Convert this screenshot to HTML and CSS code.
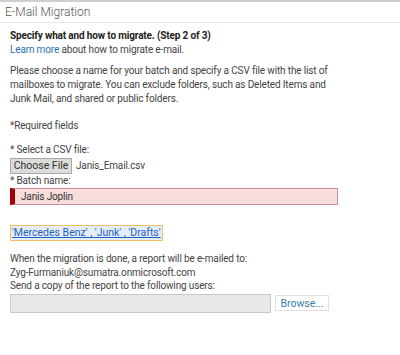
FILE: index.html
```html
<!DOCTYPE html>
<html lang="en">
<head>
    <meta charset="UTF-8">
    <title>E-Mail Migration</title>
    <link rel="stylesheet" href="styles.css">
</head>
<body>
    <div class="topbar"></div>
    <h1 class="title">E-Mail Migration</h1>
    <div class="content">
        <p class="step">Specify what and how to migrate. (Step 2 of 3)</p>
        <p class="learn"><a href="#">Learn more</a> about how to migrate e-mail.</p>

        <p class="intro">Please choose a name for your batch and specify a CSV file with the list of mailboxes to migrate. You can exclude folders, such as Deleted Items and Junk Mail, and shared or public folders.</p>

        <p class="required">*Required fields</p>

        <div class="field">
            <label>* Select a CSV file:</label>
            <div class="file-row">
                <button class="choose">Choose File</button>
                <span class="file-name">Janis_Email.csv</span>
            </div>
        </div>

        <div class="field">
            <label>* Batch name:</label>
            <div class="batch-input">Janis Joplin</div>
        </div>

        <div class="folders"><a href="#">'Mercedes Benz' , 'Junk' , 'Drafts'</a></div>

        <div class="report">
            <p>When the migration is done, a report will be e-mailed to:</p>
            <p>Zyg-Furmaniuk@sumatra.onmicrosoft.com</p>
            <p>Send a copy of the report to the following users:</p>
            <div class="browse-row">
                <div class="users-input"></div>
                <button class="browse">Browse...</button>
            </div>
        </div>
    </div>
</body>
</html>
```

FILE: styles.css
```css
body {
    margin: 0;
    background: #fff;
    font-family: 'Roboto', 'Liberation Sans', sans-serif;
    font-size: 10px;
    letter-spacing: -0.15px;
    color: #444;
}
p {
    margin: 0;
}
a {
    color: #2a72b5;
    text-decoration: none;
}
.topbar {
    height: 2px;
    background: #cfcfcf;
}
.title {
    margin: 0;
    padding: 2px 5px 1px;
    font-size: 12px;
    font-weight: 300;
    letter-spacing: 0;
    color: #555;
    border-bottom: 1px solid #e6e6e6;
    line-height: 17px;
}
.content {
    padding: 6px 10px 0;
    line-height: 14px;
}
.step {
    font-weight: bold;
    color: #222;
}
.learn {
    margin-bottom: 7px;
}
.intro {
    max-width: 330px;
    margin-bottom: 13px;
}
.required {
    margin-bottom: 10px;
}
.field label {
    display: block;
}
.file-row {
    display: flex;
    align-items: center;
    gap: 4px;
    margin: 1px 0 0;
}
.choose {
    font-family: inherit;
    font-size: 10.5px;
    color: #333;
    background: #dcdcd8;
    border: 1px solid #a9a9a9;
    padding: 0;
    width: 62px;
    height: 16px;
    line-height: 14px;
    white-space: nowrap;
}
.batch-input {
    width: 316px;
    height: 15px;
    padding-left: 6px;
    background: #f9dcdc;
    border: 1px solid #c99090;
    border-left: 5px solid #a00000;
    color: #333;
    line-height: 15px;
}
.folders {
    margin-top: 20px;
    display: inline-block;
    border: 1px solid #f0c060;
    background: #e4eefa;
    padding: 0 1px;
    line-height: 14px;
    font-size: 10.5px;
    letter-spacing: 0;
}
.folders a {
    text-decoration: underline;
    color: #1f5fbf;
}
.report {
    margin-top: 11px;
    line-height: 13.5px;
}
.browse-row {
    display: flex;
    align-items: center;
    gap: 4px;
    margin-top: 1px;
}
.users-input {
    width: 259px;
    height: 17px;
    background: #e8e8e8;
    border: 1px solid #c8c8c8;
}
.browse {
    font-family: inherit;
    font-size: 10.5px;
    color: #3c7ca8;
    background: #fff;
    border: 1px solid #e0e0e0;
    padding: 0;
    width: 54px;
    height: 16px;
}
```
